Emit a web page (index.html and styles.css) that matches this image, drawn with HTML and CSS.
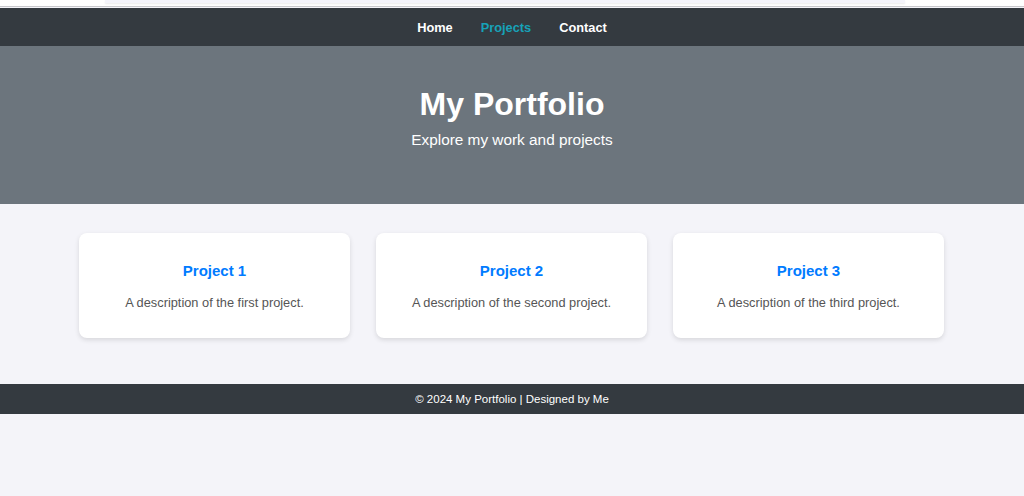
FILE: index.html
```html
<!DOCTYPE html>
<html lang="en">
<head>
  <meta charset="UTF-8">
  <meta name="viewport" content="width=device-width, initial-scale=1.0">
  <title>My Portfolio</title>
  <link rel="stylesheet" href="styles.css">
</head>
<body>
  <div class="topbar">
    <div class="topbar-box"></div>
  </div>
  <nav class="navbar">
    <a href="#" class="nav-link">Home</a>
    <a href="#" class="nav-link active">Projects</a>
    <a href="#" class="nav-link">Contact</a>
  </nav>
  <header class="hero">
    <h1>My Portfolio</h1>
    <p>Explore my work and projects</p>
  </header>
  <section class="projects">
    <div class="card">
      <h3>Project 1</h3>
      <p>A description of the first project.</p>
    </div>
    <div class="card">
      <h3>Project 2</h3>
      <p>A description of the second project.</p>
    </div>
    <div class="card">
      <h3>Project 3</h3>
      <p>A description of the third project.</p>
    </div>
  </section>
  <footer class="footer">
    <p>&copy; 2024 My Portfolio | Designed by Me</p>
  </footer>
</body>
</html>
```

FILE: styles.css
```css
body {
  font-family: "Liberation Sans", Arial, sans-serif;
  background-color: #f4f4f9;
  margin: 0;
  color: #333;
}
.topbar {
  background-color: #fff;
  height: 6px;
  border-bottom: 1px solid #c8c8cc;
  display: flex;
  padding-left: 105px;
}
.topbar-box {
  width: 800px;
  height: 3px;
  background-color: #f4f4fb;
  box-shadow: 0 1px 2px rgba(0, 0, 0, 0.08);
}
.navbar {
  background-color: #343a40;
  margin-top: 1px;
  height: 38px;
  display: flex;
  justify-content: center;
  align-items: center;
}
.nav-link {
  color: #fff;
  text-decoration: none;
  font-weight: bold;
  font-size: 12.8px;
  margin: 0 14px;
}
.nav-link.active {
  color: #17a2b8;
}
.hero {
  background-color: #6c757d;
  color: #fff;
  text-align: center;
  padding: 40px 20px 55px;
}
.hero h1 {
  font-size: 32px;
  margin: 0 0 8px;
}
.hero p {
  font-size: 15.36px;
  margin: 0;
}
.projects {
  display: grid;
  grid-template-columns: repeat(3, 271px);
  gap: 26px;
  justify-content: center;
  padding: 29px 1px 46px 0;
}
.card {
  background-color: #fff;
  border-radius: 8px;
  box-shadow: 0 2px 5px rgba(0, 0, 0, 0.12);
  text-align: center;
  height: 105px;
  padding: 29px 16px 0;
  box-sizing: border-box;
}
.card h3 {
  color: #007bff;
  font-size: 15px;
  margin: 0 0 16px;
}
.card p {
  color: #555;
  font-size: 12.8px;
  margin: 0;
}
.footer {
  background-color: #343a40;
  color: #fff;
  text-align: center;
  height: 30px;
  display: flex;
  align-items: center;
  justify-content: center;
}
.footer p {
  font-size: 11.5px;
  margin: 0;
}
```
